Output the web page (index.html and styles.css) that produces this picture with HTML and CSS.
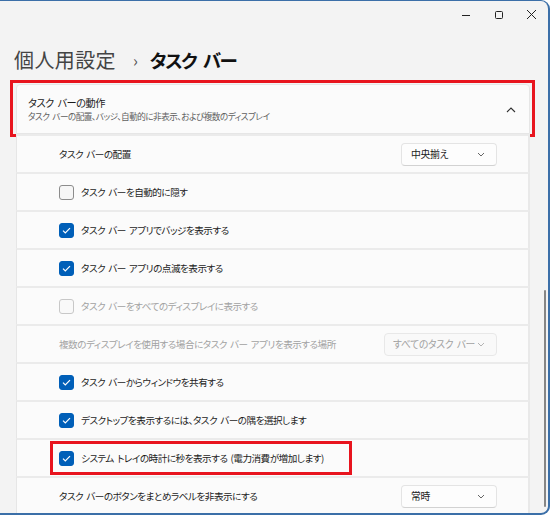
FILE: index.html
```html
<!DOCTYPE html>
<html lang="ja">
<head>
<meta charset="utf-8">
<link rel="stylesheet" href="styles.css">
</head>
<body>
<div class="window">
  <div class="titlebar">
    <span class="ctl"><svg width="10" height="10" viewBox="0 0 10 10"><path d="M1 5.5h8" stroke="#222" stroke-width="1"/></svg></span>
    <span class="ctl"><svg width="10" height="10" viewBox="0 0 10 10"><rect x="1.5" y="1.5" width="7" height="7" rx="1" fill="none" stroke="#222" stroke-width="1"/></svg></span>
    <span class="ctl"><svg width="11" height="11" viewBox="0 0 11 11"><path d="M1 1l9 9M10 1l-9 9" stroke="#222" stroke-width="1"/></svg></span>
  </div>
  <h1 class="crumb"><span class="parent">個人用設定</span><span class="sep">›</span><span class="current">タスク バー</span></h1>
  <div class="expander">
    <div class="exp-head">
      <div class="exp-text">
        <div class="exp-title">タスク バーの動作</div>
        <div class="exp-sub">タスク バーの配置、バッジ、自動的に非表示、および複数のディスプレイ</div>
      </div>
      <svg class="chev-up" width="10" height="6" viewBox="0 0 10 6"><path d="M1 5l4-4 4 4" fill="none" stroke="#333" stroke-width="1.1"/></svg>
      <div class="mark mark-head"></div>
    </div>
    <div class="row">
      <span class="label">タスク バーの配置</span>
      <div class="combo"><span>中央揃え</span><svg width="8" height="5" viewBox="0 0 8 5"><path d="M1 1l3 3 3-3" fill="none" stroke="#555" stroke-width="0.9"/></svg></div>
    </div>
    <div class="row">
      <span class="cb"></span><span class="label">タスク バーを自動的に隠す</span>
    </div>
    <div class="row">
      <span class="cb on"><svg width="15" height="15" viewBox="0 0 15 15"><path d="M4 7.6l2.3 2.3 4.7-4.8" fill="none" stroke="#fff" stroke-width="1.2"/></svg></span><span class="label">タスク バー アプリでバッジを表示する</span>
    </div>
    <div class="row">
      <span class="cb on"><svg width="15" height="15" viewBox="0 0 15 15"><path d="M4 7.6l2.3 2.3 4.7-4.8" fill="none" stroke="#fff" stroke-width="1.2"/></svg></span><span class="label">タスク バー アプリの点滅を表示する</span>
    </div>
    <div class="row">
      <span class="cb off"></span><span class="label dim">タスク バーをすべてのディスプレイに表示する</span>
    </div>
    <div class="row">
      <span class="label dim">複数のディスプレイを使用する場合にタスク バー アプリを表示する場所</span>
      <div class="combo wide off"><span>すべてのタスク バー</span><svg width="8" height="5" viewBox="0 0 8 5"><path d="M1 1l3 3 3-3" fill="none" stroke="#aaa" stroke-width="0.9"/></svg></div>
    </div>
    <div class="row">
      <span class="cb on"><svg width="15" height="15" viewBox="0 0 15 15"><path d="M4 7.6l2.3 2.3 4.7-4.8" fill="none" stroke="#fff" stroke-width="1.2"/></svg></span><span class="label">タスク バーからウィンドウを共有する</span>
    </div>
    <div class="row">
      <span class="cb on"><svg width="15" height="15" viewBox="0 0 15 15"><path d="M4 7.6l2.3 2.3 4.7-4.8" fill="none" stroke="#fff" stroke-width="1.2"/></svg></span><span class="label">デスクトップを表示するには、タスク バーの隅を選択します</span>
    </div>
    <div class="row">
      <span class="cb on"><svg width="15" height="15" viewBox="0 0 15 15"><path d="M4 7.6l2.3 2.3 4.7-4.8" fill="none" stroke="#fff" stroke-width="1.2"/></svg></span><span class="label">システム トレイの時計に秒を表示する (電力消費が増加します)</span>
      <div class="mark mark-row"></div>
    </div>
    <div class="row">
      <span class="label">タスク バーのボタンをまとめラベルを非表示にする</span>
      <div class="combo"><span>常時</span><svg width="8" height="5" viewBox="0 0 8 5"><path d="M1 1l3 3 3-3" fill="none" stroke="#555" stroke-width="0.9"/></svg></div>
    </div>
  </div>
  <div class="scrollbar"></div>
</div>
</body>
</html>
```

FILE: styles.css
```css
* { box-sizing: border-box; }
html, body { margin: 0; padding: 0; background: #ffffff; }
body {
  width: 550px;
  height: 515px;
  overflow: hidden;
  font-family: "Noto Sans CJK JP", "Noto Sans", sans-serif;
  font-feature-settings: "palt";
  color: #1b1b1b;
}
.window {
  position: relative;
  width: 550px;
  height: 515px;
  background: #f3f3f3;
  border-top: 1px solid #3b6fa8;
  border-right: 2px solid #3b6fa8;
  border-bottom: 2px solid #3b6fa8;
  border-top-right-radius: 9px;
  border-bottom-right-radius: 9px;
  overflow: hidden;
}
.titlebar {
  height: 27px;
  display: flex;
  justify-content: flex-end;
  align-items: center;
}
.ctl {
  width: 33px;
  height: 27px;
  display: flex;
  align-items: center;
  justify-content: center;
}
.crumb {
  margin: 18px 0 10px 14px;
  height: 28px;
  line-height: 28px;
  font-size: 20px;
  font-weight: 400;
  display: flex;
  align-items: center;
  white-space: nowrap;
}
.crumb .parent { color: #444444; letter-spacing: 0.4px; }
.crumb .sep { color: #555; font-size: 16px; margin: 0 12px 0 17px; }
.crumb .current { font-weight: 700; color: #111; font-size: 18.5px; letter-spacing: -1.5px; word-spacing: 4px; }
.expander {
  margin-left: 16px;
  width: 514px;
}
.exp-head {
  position: relative;
  height: 50px;
  background: #fbfbfb;
  border: 1px solid #e6e6e6;
  border-radius: 4px 4px 0 0;
  display: flex;
  align-items: center;
  justify-content: space-between;
  padding: 0 13px 0 11px;
}
.exp-text { display: flex; flex-direction: column; }
.exp-title { font-size: 10.2px; line-height: 14px; color: #1b1b1b; letter-spacing: -0.5px; word-spacing: 2px; }
.exp-sub { font-size: 8.6px; line-height: 12px; color: #5f5f5f; letter-spacing: -0.5px; word-spacing: 1.5px; }
.chev-up { margin-top: 2px; }
.mark {
  position: absolute;
  border: 3px solid #e8141e;
  pointer-events: none;
}
.mark-head { left: -7px; top: -5px; right: -6px; bottom: -4px; }
.row {
  position: relative;
  height: 38px;
  background: #fbfbfb;
  border-top: 2px solid #ebebeb;
  border-left: 1px solid #e6e6e6;
  border-right: 2px solid #e9e9e9;
  display: flex;
  align-items: center;
  padding: 0 31px 0 42px;
}
.label {
  font-size: 9.6px;
  line-height: 14px;
  letter-spacing: -0.5px;
  word-spacing: 1.5px;
  white-space: nowrap;
  flex: 1;
  color: #1b1b1b;
}
.label.dim { color: #a2a2a2; }
.cb {
  width: 15px;
  height: 15px;
  flex: none;
  border: 1px solid #8c8c8c;
  border-radius: 3px;
  background: #f6f6f6;
  margin-right: 7px;
  display: flex;
}
.cb.on { background: #005fb8; border-color: #005fb8; }
.cb.on svg { margin: -1px; }
.cb.off { border-color: #c8c8c8; background: #f9f9f9; }
.combo {
  flex: none;
  width: 96px;
  height: 23px;
  background: #fdfdfd;
  border: 1px solid #e4e4e4;
  border-bottom-color: #d2d2d2;
  border-radius: 4px;
  display: flex;
  align-items: center;
  justify-content: space-between;
  padding: 0 11px 0 9px;
  font-size: 9.8px;
  letter-spacing: -0.3px;
  word-spacing: 1.5px;
  white-space: nowrap;
  color: #1b1b1b;
}
.combo.wide { width: 113px; padding-left: 8px; }
.combo.off { color: #a2a2a2; background: #f9f9f9; border-color: #e8e8e8; }
.mark-row { left: 33px; top: 1px; width: 302px; height: 34px; }
.scrollbar {
  position: absolute;
  left: 544px;
  top: 289px;
  width: 2px;
  height: 217px;
  background: #868686;
  border-radius: 1px;
}
```
